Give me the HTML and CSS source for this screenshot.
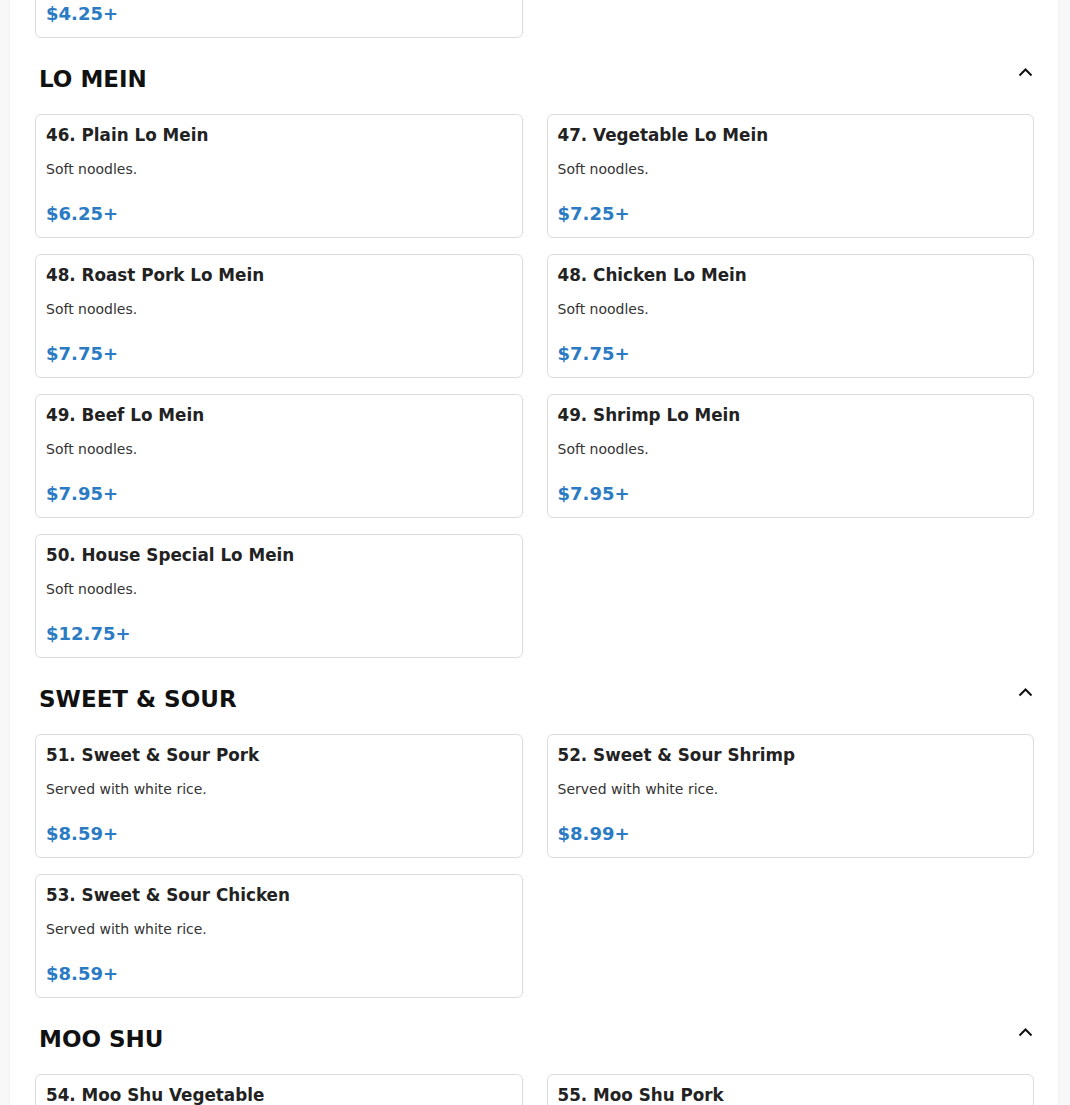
FILE: index.html
```html
<!DOCTYPE html>
<html lang="en">
<head>
<meta charset="utf-8">
<title>Menu</title>
<link rel="stylesheet" href="styles.css">
</head>
<body>
<main class="menu">
  <section class="section section-first">
    <div class="grid">
      <article class="card">
        <h3 class="item-name">45. Shrimp Chow Mein</h3>
        <p class="item-desc">Crispy noodles.</p>
        <div class="item-price">$4.25+</div>
      </article>
    </div>
  </section>

  <section class="section">
    <header class="section-head">
      <h2 class="section-title">LO MEIN</h2>
      <svg class="chevron" viewBox="0 0 16 16" width="16" height="16" aria-hidden="true"><path d="M1.5 9.5 L7.5 3.5 L13.5 9.5" fill="none" stroke="#111" stroke-width="2"/></svg>
    </header>
    <div class="grid">
      <article class="card"><h3 class="item-name">46. Plain Lo Mein</h3><p class="item-desc">Soft noodles.</p><div class="item-price">$6.25+</div></article>
      <article class="card"><h3 class="item-name">47. Vegetable Lo Mein</h3><p class="item-desc">Soft noodles.</p><div class="item-price">$7.25+</div></article>
      <article class="card"><h3 class="item-name">48. Roast Pork Lo Mein</h3><p class="item-desc">Soft noodles.</p><div class="item-price">$7.75+</div></article>
      <article class="card"><h3 class="item-name">48. Chicken Lo Mein</h3><p class="item-desc">Soft noodles.</p><div class="item-price">$7.75+</div></article>
      <article class="card"><h3 class="item-name">49. Beef Lo Mein</h3><p class="item-desc">Soft noodles.</p><div class="item-price">$7.95+</div></article>
      <article class="card"><h3 class="item-name">49. Shrimp Lo Mein</h3><p class="item-desc">Soft noodles.</p><div class="item-price">$7.95+</div></article>
      <article class="card"><h3 class="item-name">50. House Special Lo Mein</h3><p class="item-desc">Soft noodles.</p><div class="item-price">$12.75+</div></article>
    </div>
  </section>

  <section class="section">
    <header class="section-head">
      <h2 class="section-title">SWEET &amp; SOUR</h2>
      <svg class="chevron" viewBox="0 0 16 16" width="16" height="16" aria-hidden="true"><path d="M1.5 9.5 L7.5 3.5 L13.5 9.5" fill="none" stroke="#111" stroke-width="2"/></svg>
    </header>
    <div class="grid">
      <article class="card"><h3 class="item-name">51. Sweet &amp; Sour Pork</h3><p class="item-desc">Served with white rice.</p><div class="item-price">$8.59+</div></article>
      <article class="card"><h3 class="item-name">52. Sweet &amp; Sour Shrimp</h3><p class="item-desc">Served with white rice.</p><div class="item-price">$8.99+</div></article>
      <article class="card"><h3 class="item-name">53. Sweet &amp; Sour Chicken</h3><p class="item-desc">Served with white rice.</p><div class="item-price">$8.59+</div></article>
    </div>
  </section>

  <section class="section">
    <header class="section-head">
      <h2 class="section-title">MOO SHU</h2>
      <svg class="chevron" viewBox="0 0 16 16" width="16" height="16" aria-hidden="true"><path d="M1.5 9.5 L7.5 3.5 L13.5 9.5" fill="none" stroke="#111" stroke-width="2"/></svg>
    </header>
    <div class="grid">
      <article class="card"><h3 class="item-name">54. Moo Shu Vegetable</h3><p class="item-desc">Served with pancakes.</p><div class="item-price">$8.25+</div></article>
      <article class="card"><h3 class="item-name">55. Moo Shu Pork</h3><p class="item-desc">Served with pancakes.</p><div class="item-price">$8.95+</div></article>
    </div>
  </section>
</main>
</body>
</html>
```

FILE: styles.css
```css
* { box-sizing: border-box; }

html, body {
  margin: 0;
  padding: 0;
}

body {
  background: #f8f8f8;
  font-family: "DejaVu Sans", "Liberation Sans", sans-serif;
  color: #222;
  overflow: hidden;
}

.menu {
  width: 1048px;
  margin: -86px 0 0 10px;
  padding: 0 24px 40px 25px;
  background: #fff;
  box-shadow: 0 0 3px rgba(0, 0, 0, 0.05);
}

.section-head {
  display: flex;
  justify-content: space-between;
  align-items: flex-start;
  margin: 28px 0 21px;
  padding-left: 4px;
}

.section-title {
  margin: 0;
  font-size: 23px;
  line-height: 27px;
  font-weight: bold;
  color: #111;
}

.chevron {
  display: block;
  flex: none;
}

.grid {
  display: grid;
  grid-template-columns: 1fr 1fr;
  column-gap: 24px;
  row-gap: 16px;
}

.card {
  height: 124px;
  border: 1px solid #dcdcdc;
  border-radius: 6px;
  padding: 10px 10px 12px;
  background: #fff;
}

.item-name {
  margin: 0;
  font-size: 16.8px;
  line-height: 20px;
  font-weight: bold;
  color: #222;
}

.item-desc {
  margin: 16px 0 0;
  font-size: 14px;
  line-height: 16px;
  color: #333;
}

.item-price {
  margin-top: 26px;
  font-size: 18px;
  line-height: 21px;
  font-weight: bold;
  color: #2b7bc4;
}
```
